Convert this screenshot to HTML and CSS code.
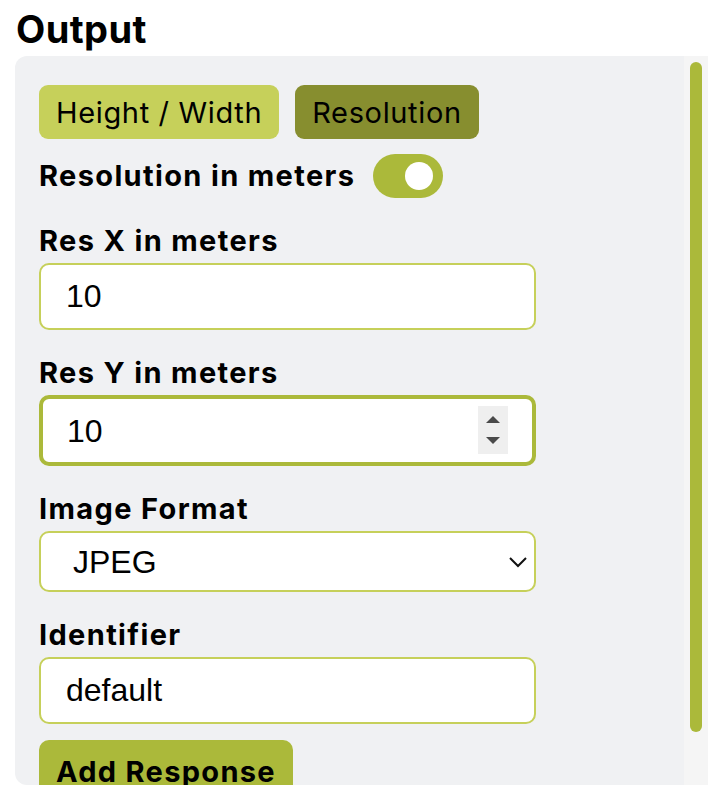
FILE: index.html
```html
<!DOCTYPE html>
<html lang="en">
<head>
<meta charset="utf-8">
<title>Output</title>
<link rel="stylesheet" href="styles.css">
</head>
<body>
<h2 class="title">Output</h2>
<div class="panel">
  <div class="panel-content">
    <div class="tabs">
      <button class="tab tab-light">Height / Width</button>
      <button class="tab tab-dark">Resolution</button>
    </div>
    <div class="toggle-row">
      <span class="label">Resolution in meters</span>
      <span class="toggle"><span class="knob"></span></span>
    </div>
    <div class="field">
      <label class="label">Res X in meters</label>
      <input class="input" type="text" value="10">
    </div>
    <div class="field">
      <label class="label">Res Y in meters</label>
      <div class="input-wrap">
        <input class="input input-focus" type="text" value="10">
        <span class="spinner">
          <svg width="30" height="48" viewBox="0 0 30 48"><path d="M8 17 L15 10 L22 17 Z" fill="#4a4a4a"/><path d="M8 31 L22 31 L15 38 Z" fill="#4a4a4a"/></svg>
        </span>
      </div>
    </div>
    <div class="field">
      <label class="label">Image Format</label>
      <div class="input-wrap">
        <select class="select"><option>JPEG</option></select>
        <svg class="chevron" width="20" height="12" viewBox="0 0 20 12"><path d="M2 2 L10 10 L18 2" fill="none" stroke="#111" stroke-width="2"/></svg>
      </div>
    </div>
    <div class="field">
      <label class="label">Identifier</label>
      <input class="input" type="text" value="default">
    </div>
    <button class="add-btn">Add Response</button>
  </div>
  <div class="scrollbar"><div class="thumb"></div></div>
</div>
</body>
</html>
```

FILE: styles.css
```css
html, body {
  margin: 0;
  padding: 0;
  background: #ffffff;
}
body {
  font-family: Inter, "Noto Sans", sans-serif;
  color: #000;
}
.title {
  font-family: Inter, sans-serif;
  font-weight: 700;
  font-size: 38px;
  line-height: 46px;
  margin: 6px 0 4px 16px;
  letter-spacing: 0.4px;
}
.panel {
  margin-left: 15px;
  width: 693px;
  height: 729px;
  display: flex;
  background: #f0f1f3;
  border-radius: 12px 0 0 12px;
  overflow: hidden;
}
.panel-content {
  flex: 1;
  overflow: hidden;
  padding: 29px 0 29px 24px;
}
.scrollbar {
  width: 24px;
  flex: none;
  background: #f5f5f5;
  padding-top: 6px;
  box-sizing: border-box;
}
.thumb {
  width: 12px;
  height: 670px;
  margin-left: 6px;
  border-radius: 6px;
  background: #abb93a;
}
.tabs {
  display: flex;
  gap: 16px;
}
.tab {
  font-family: Inter, sans-serif;
  font-size: 29px;
  font-weight: 400;
  letter-spacing: 0.65px;
  height: 54px;
  padding: 0 17px;
  border: none;
  border-radius: 9px;
  color: #000;
}
.tab-light {
  background: #c6d05a;
}
.tab-dark {
  background: #878e2f;
}
.toggle-row {
  display: flex;
  align-items: center;
  gap: 18px;
  margin-top: 15px;
  height: 44px;
}
.label {
  display: block;
  font-family: Inter, sans-serif;
  font-weight: 700;
  font-size: 29px;
  letter-spacing: 1.35px;
  line-height: 34px;
}
.toggle {
  position: relative;
  display: inline-block;
  flex: none;
  width: 70px;
  height: 44px;
  border-radius: 22px;
  background: #abb93a;
}
.knob {
  position: absolute;
  right: 10px;
  top: 8px;
  width: 28px;
  height: 28px;
  border-radius: 50%;
  background: #fff;
}
.field {
  margin-top: 26px;
}
.field .label {
  margin-bottom: 5px;
}
.input-wrap {
  position: relative;
  width: 497px;
}
.input {
  display: block;
  box-sizing: border-box;
  width: 497px;
  height: 67px;
  border: 2px solid #c6d05a;
  border-radius: 10px;
  background: #fff;
  padding: 0 25px;
  font-family: "Liberation Sans", Arial, sans-serif;
  font-size: 32px;
  color: #000;
  outline: none;
}
.input-focus {
  height: 71px;
  border: 4px solid #abb93a;
  padding: 2px 24px 0;
}
.spinner {
  position: absolute;
  right: 28px;
  top: 11px;
  width: 30px;
  height: 48px;
  background: #efefef;
  display: flex;
}
.select {
  display: block;
  box-sizing: border-box;
  width: 497px;
  height: 61px;
  -webkit-appearance: none;
  appearance: none;
  border: 2px solid #c6d05a;
  border-radius: 10px;
  background: #fff;
  padding: 0 32px;
  font-family: "Liberation Sans", Arial, sans-serif;
  font-size: 32px;
  color: #000;
  outline: none;
}
.chevron {
  position: absolute;
  right: 8px;
  top: 25px;
}
.add-btn {
  display: block;
  margin-top: 16px;
  height: 63px;
  padding: 0 17px;
  border: none;
  border-radius: 10px;
  background: #abb93a;
  font-family: Inter, sans-serif;
  font-weight: 700;
  font-size: 29px;
  letter-spacing: 1.3px;
  color: #000;
}
```
